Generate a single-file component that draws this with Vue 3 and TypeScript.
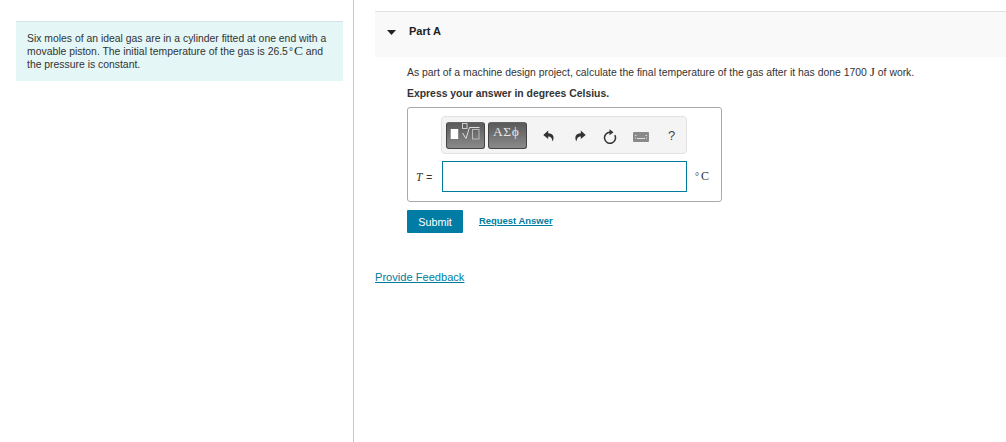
<script setup lang="ts">
const title: string = 'Part A'
</script>

<template>
  <div class="page">
    <aside class="left">
      <div class="intro">
        Six moles of an ideal gas are in a cylinder fitted at one end with a movable piston. The initial temperature of the gas is 26.5<span class="deg">°</span><span class="serif big">C</span> and the pressure is constant.
      </div>
    </aside>
    <main class="right">
      <header class="part">
        <svg class="caret" width="9" height="5" viewBox="0 0 9 5"><path d="M0 0H9L4.5 5Z" fill="#222" /></svg>
        <span class="title">{{ title }}</span>
      </header>
      <div class="content">
        <p class="q">As part of a machine design project, calculate the final temperature of the gas after it has done 1700 <span class="serif jj">J</span> of work.</p>
        <p class="express">Express your answer in degrees Celsius.</p>
        <div class="box">
          <div class="toolrow">
            <div class="toolbar">
              <div class="btn b1">
                <svg width="37" height="25" viewBox="0 0 37 25">
                  <rect x="3.7" y="6" width="7.5" height="10" fill="#fff" />
                  <rect x="15.5" y="0.5" width="4.5" height="5" fill="none" stroke="#ccc" />
                  <path d="M15.5 10 L19 15.5 L22.5 4.5 H32.5" fill="none" stroke="#ddd" stroke-width="1" />
                  <rect x="25.5" y="6.5" width="6.5" height="9.5" fill="none" stroke="#bbb" />
                </svg>
              </div>
              <div class="btn b2">ΑΣϕ</div>
              <svg class="ic i1" width="12" height="12" viewBox="0 0 12 12"><path d="M5.2 0.5 L0.3 5 L5.2 9 V6.6 C7.6 6.6 8.8 7.8 9.6 11.5 C11.8 7 10.4 3.4 5.2 3.2Z" fill="#333" /></svg>
              <svg class="ic i2" width="12" height="12" viewBox="0 0 12 12"><path d="M6.8 0.5 L11.7 5 L6.8 9 V6.6 C4.4 6.6 3.2 7.8 2.4 11.5 C0.2 7 1.6 3.4 6.8 3.2Z" fill="#333" /></svg>
              <svg class="ic i3" width="14" height="15" viewBox="0 0 14 15"><path d="M7 3.3 A5.5 5.5 0 1 0 11.8 6.1" fill="none" stroke="#333" stroke-width="1.5" /><path d="M6.5 0.3 L10.5 3.3 L6.5 6.3Z" fill="#333" /></svg>
              <svg class="ic i4" width="16" height="10" viewBox="0 0 16 10"><rect width="16" height="10" rx="1" fill="#8a8a8a" /><path d="M4 6.5H12" stroke="#ddd" /><path d="M2 3.5h1.5M12.5 3.5h1.5M2 6h1M13 6h1" stroke="#ddd" /></svg>
              <span class="help">?</span>
            </div>
          </div>
          <div class="inputrow">
            <span class="label"><i class="serif">T</i> =</span>
            <div class="input"></div>
            <span class="unit serif"><span class="udeg">°</span>C</span>
          </div>
        </div>
        <div class="actions">
          <button class="submit" type="button">Submit</button>
          <a class="req">Request Answer</a>
        </div>
      </div>
      <a class="feedback">Provide Feedback</a>
    </main>
  </div>
</template>

<style>
html, body { margin: 0; background: #fff; }
</style>

<style scoped>
.page {
  display: flex;
  width: 1006px;
  height: 442px;
  overflow: hidden;
  font-family: "Liberation Sans", Arial, sans-serif;
  color: #333;
}
.left {
  box-sizing: border-box;
  width: 354px;
  flex: none;
  padding: 21px 10px 0 16px;
  border-right: 1px solid #c7c7c7;
}
.intro {
  box-sizing: border-box;
  height: 60px;
  padding: 10px 11px 0;
  background: #e4f6f6;
  border-top: 1px solid #d5e3e8;
  font-size: 10.4px;
  line-height: 13px;
}
.serif { font-family: "Liberation Serif", "Times New Roman", serif; }
.big { font-size: 13.5px; line-height: 12px; }
.deg { font-size: 10px; line-height: 12px; margin: 0 1px 0 1px; }
.right {
  flex: 1;
  min-width: 0;
  padding: 11px 0 0 21px;
}
.part {
  box-sizing: border-box;
  height: 46px;
  display: flex;
  align-items: flex-start;
  background: #f9f9f9;
  border-top: 1px solid #e3e3e3;
  padding: 13px 0 0 12px;
}
.caret { margin-top: 5px; }
.title {
  margin-left: 13px;
  font-size: 11px;
  font-weight: 700;
  color: #222;
  line-height: 13px;
}
.content { padding-left: 32px; }
.q {
  margin: 8px 0 0;
  font-size: 10.4px;
  line-height: 14px;
}
.jj { font-size: 13.5px; line-height: 14px; }
.express {
  margin: 7px 0 0;
  font-size: 10.4px;
  line-height: 14px;
  font-weight: 700;
}
.box {
  box-sizing: border-box;
  width: 315px;
  height: 95px;
  margin-top: 6px;
  border: 1px solid #a9a9a9;
  border-radius: 3px;
  padding: 8px 0 0 8px;
}
.toolrow { padding-left: 25px; }
.toolbar {
  box-sizing: border-box;
  width: 246px;
  height: 38px;
  background: #f4f4f4;
  border: 1px solid #e2e2e2;
  border-radius: 4px;
  display: flex;
  align-items: center;
  padding-left: 4px;
}
.btn {
  box-sizing: border-box;
  height: 27px;
  border-radius: 3px;
  background: linear-gradient(#5a5a5a, #8a8a8a);
  border: 1px solid #444;
  border-top-color: #666;
  color: #e6e6e6;
  display: flex;
  align-items: flex-start;
}
.b1 { width: 39px; }
.b1 svg { display: block; }
.b2 {
  width: 39px;
  margin-left: 3px;
  padding-left: 4px;
  font-family: "Liberation Serif", "Times New Roman", serif;
  font-size: 13.5px;
  line-height: 17px;
  letter-spacing: 0.6px;
}
.ic { flex: none; }
.i1 { margin-left: 16px; margin-top: 2px; }
.i2 { margin-left: 19px; margin-top: 2px; }
.i3 { margin-left: 17px; margin-top: 2px; }
.i4 { margin-left: 16px; margin-top: 4px; }
.help { margin-left: 19px; font-size: 13px; color: #444; }
.inputrow {
  display: flex;
  align-items: center;
  margin-top: 7px;
}
.label { width: 26px; font-size: 10.4px; white-space: pre; word-spacing: 1px; }
.label i { font-size: 11.5px; }
.input {
  box-sizing: border-box;
  width: 245px;
  height: 31px;
  border: 1px solid #007c9f;
  background: #fff;
}
.unit { margin-left: 8px; font-size: 12px; color: #333; }
.udeg { font-size: 10px; margin-right: 2px; }
.actions {
  display: flex;
  align-items: flex-start;
  margin-top: 8px;
}
.submit {
  box-sizing: border-box;
  width: 56px;
  height: 23px;
  padding: 0;
  border: 0;
  border-radius: 1px;
  background: #007ca5;
  color: #fff;
  font-family: inherit;
  font-size: 10.8px;
}
.req {
  margin-left: 16px;
  margin-top: 5px;
  font-size: 9.45px;
  line-height: 12px;
  font-weight: 700;
  color: #007c9f;
  text-decoration: underline;
}
.feedback {
  display: block;
  margin-top: 37px;
  font-size: 11.1px;
  line-height: 14px;
  color: #007c9f;
  text-decoration: underline;
}
</style>
